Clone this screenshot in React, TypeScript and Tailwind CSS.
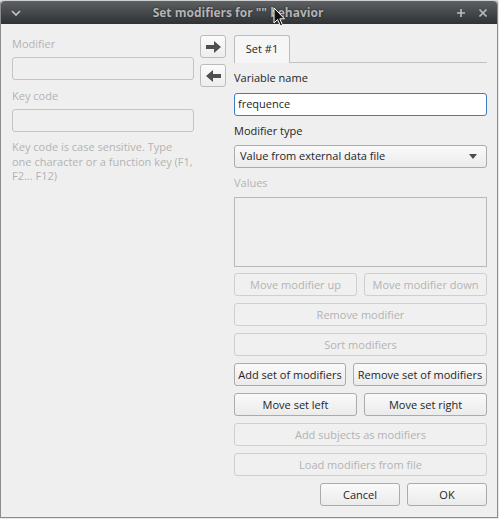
import React from "react";

const font = { fontFamily: '"Open Sans", "Noto Sans", sans-serif' };

function Btn({ children, disabled, className = "" }: { children: React.ReactNode; disabled?: boolean; className?: string }) {
  return (
    <div
      className={
        "h-[23px] flex items-center justify-center rounded-[3px] border text-[11px] leading-[15px] whitespace-nowrap " +
        (disabled
          ? "border-[#cfcfcf] bg-[#f0f0f0] text-[#b3b3b3] "
          : "border-[#ababab] bg-gradient-to-b from-[#fafafa] to-[#ebebeb] text-[#232627] ") +
        className
      }
    >
      {children}
    </div>
  );
}

function ArrowBtn({ dir }: { dir: "right" | "left" }) {
  return (
    <div className="w-[26px] h-[23px] rounded-[3px] border border-[#bcbcbc] bg-gradient-to-b from-[#fbfbfb] to-[#ededed] flex items-center justify-center">
      <svg width="15" height="12" viewBox="0 0 15 12">
        {dir === "right" ? (
          <path d="M0 4 H8 V0 L15 6 L8 12 V8 H0 Z" fill="#4f4f4f" />
        ) : (
          <path d="M15 4 H7 V0 L0 6 L7 12 V8 H15 Z" fill="#4f4f4f" />
        )}
      </svg>
    </div>
  );
}

export default function App() {
  return (
    <div className="w-[499px] h-[519px] bg-[#e8e8e8]" style={font}>
      <div className="relative w-[498px] h-[518px] border border-[#8c8c8c] border-t-0 rounded-t-[4px] bg-[#efefef] flex flex-col overflow-hidden">
        {/* Title bar */}
        <div className="h-[24px] shrink-0 bg-gradient-to-b from-[#5e6164] via-[#45494c] to-[#2f3235] border-t border-[#d0d0d0] rounded-t-[4px] flex items-center relative">
          <div className="w-[28px] flex items-center justify-center pl-[2px]">
            <svg width="10" height="6" viewBox="0 0 10 6">
              <path d="M1 1 L5 5 L9 1" stroke="#c8c8c8" strokeWidth="1.6" fill="none" />
            </svg>
          </div>
          <div className="flex-1 text-center text-[12px] font-bold text-[#b4b4b4]" style={{ textShadow: "0 0 2px #1e1e1e" }}>
            Set modifiers for "" behavior
          </div>
          <div className="w-[50px] flex items-center justify-end gap-[12px] pr-[9px]">
            <svg width="10" height="10" viewBox="0 0 10 10">
              <path d="M5 1 V9 M1 5 H9" stroke="#bdbdbd" strokeWidth="1.6" />
            </svg>
            <svg width="10" height="10" viewBox="0 0 10 10">
              <path d="M1.5 1.5 L8.5 8.5 M8.5 1.5 L1.5 8.5" stroke="#bdbdbd" strokeWidth="1.6" />
            </svg>
          </div>
          {/* mouse cursor */}
          <svg className="absolute left-[272px] top-[6px]" width="13" height="20" viewBox="0 0 13 20">
            <path d="M1 1 V16 L4.5 12.5 L7.5 19 L9.5 18 L6.8 11.8 L11.5 11.8 Z" fill="#111" stroke="#fff" strokeWidth="1" strokeLinejoin="round" />
          </svg>
        </div>

        {/* Body */}
        <div className="flex flex-row pl-[11px]">
          {/* Left column */}
          <div className="w-[182px] pt-[12px] flex flex-col">
            <div className="text-[11px] leading-[15px] text-[#b3b3b3]">Modifier</div>
            <div className="mt-[6px] h-[23px] rounded-[3px] border border-[#c4c4c4] bg-[#efefef]" />
            <div className="mt-[8px] text-[11px] leading-[15px] text-[#b3b3b3]">Key code</div>
            <div className="mt-[6px] h-[23px] rounded-[3px] border border-[#c4c4c4] bg-[#efefef]" />
            <div className="mt-[8px] text-[11px] leading-[14.5px] text-[#b3b3b3]">
              Key code is case sensitive. Type one character or a function key (F1, F2... F12)
            </div>
          </div>

          {/* Arrow buttons */}
          <div className="ml-[6px] pt-[11px] flex flex-col gap-[6px]">
            <ArrowBtn dir="right" />
            <ArrowBtn dir="left" />
          </div>

          {/* Right panel */}
          <div className="ml-[8px] w-[253px] pt-[11px] flex flex-col">
            {/* Tab bar */}
            <div className="flex flex-row items-end">
              <div className="w-[56px] h-[28px] rounded-t-[3px] border border-b-0 border-[#bdbdbd] bg-[#f6f6f6] flex items-center justify-center text-[11px] text-[#232627]">
                Set #1
              </div>
              <div className="flex-1 h-[1px] bg-[#c2c2c2]" />
            </div>

            <div className="mt-[7px] text-[11px] leading-[15px] text-[#232627]">Variable name</div>
            <div className="mt-[8px] h-[23px] rounded-[3px] border border-[#3a7fc6] bg-white flex items-center pl-[3px] text-[11px] text-[#232627]">
              frequence
            </div>
            <div className="mt-[7px] text-[11px] leading-[15px] text-[#232627]">Modifier type</div>
            <div className="mt-[7px] h-[23px] rounded-[3px] border border-[#ababab] bg-gradient-to-b from-[#fafafa] to-[#ebebeb] flex items-center justify-between pl-[5px] pr-[9px] text-[11px] text-[#232627]">
              <span>Value from external data file</span>
              <svg width="8" height="5" viewBox="0 0 8 5">
                <path d="M0 0 H8 L4 5 Z" fill="#4a4a4a" />
              </svg>
            </div>
            <div className="mt-[7px] text-[11px] leading-[15px] text-[#b3b3b3]">Values</div>
            <div className="mt-[7px] h-[70px] border border-[#b9b9b9] bg-[#efefef]" />

            <div className="mt-[6px] flex flex-col gap-[7px]">
              <div className="flex flex-row gap-[7px]">
                <Btn disabled className="flex-1">Move modifier up</Btn>
                <Btn disabled className="flex-1">Move modifier down</Btn>
              </div>
              <Btn disabled>Remove modifier</Btn>
              <Btn disabled>Sort modifiers</Btn>
              <div className="flex flex-row gap-[7px]">
                <Btn className="w-[112px]">Add set of modifiers</Btn>
                <Btn className="flex-1">Remove set of modifiers</Btn>
              </div>
              <div className="flex flex-row gap-[7px]">
                <Btn className="flex-1">Move set left</Btn>
                <Btn className="flex-1">Move set right</Btn>
              </div>
              <Btn disabled>Add subjects as modifiers</Btn>
              <Btn disabled>Load modifiers from file</Btn>
              <div className="flex flex-row justify-end gap-[7px]">
                <Btn className="w-[80px]">Cancel</Btn>
                <Btn className="w-[80px]">OK</Btn>
              </div>
            </div>
          </div>
        </div>
      </div>
    </div>
  );
}
